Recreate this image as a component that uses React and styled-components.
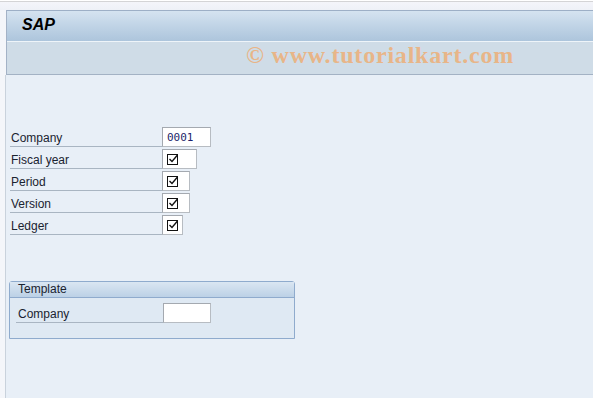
import React from "react";
import styled, { createGlobalStyle } from "styled-components";

const Global = createGlobalStyle`
  html, body { margin: 0; padding: 0; background: #f4f6fa; }
  body { font-family: "Liberation Sans", Arial, sans-serif; overflow: hidden; }
  #root { height: 398px; }
`;

const Page = styled.div`
  display: flex;
  flex-direction: column;
  height: 398px;
  width: 593px;
  overflow: hidden;
`;

const TopStrip = styled.div`
  height: 10px;
  flex: none;
  background: linear-gradient(
    to bottom,
    #ffffff 0,
    #ffffff 1px,
    #d4d4d6 1px,
    #d4d4d6 2px,
    #f4f5fa 2px,
    #eef1f7 100%
  );
`;

const Frame = styled.div`
  margin-left: 6px;
  border-left: 1px solid #a3b2c6;
  display: flex;
  flex-direction: column;
  flex: none;
`;

const TitleBar = styled.div`
  height: 30px;
  border-top: 1px solid #9dafc6;
  background: linear-gradient(to bottom, #d5e3f0 0%, #c2d5e7 45%, #adc5dc 100%);
  display: flex;
  align-items: center;
  padding-left: 15px;
  border-bottom: 1px solid #eef4f9;
`;

const Title = styled.span`
  font-family: "Liberation Sans", Arial, sans-serif;
  font-weight: bold;
  font-style: italic;
  font-size: 16px;
  color: #000;
  margin-top: -2px;
`;

const Band = styled.div`
  height: 32px;
  background: #cfdce7;
  border-bottom: 1px solid #a3b2c4;
  display: flex;
  align-items: center;
  padding-left: 239px;
`;

const Watermark = styled.span`
  font-family: "Liberation Serif", "Times New Roman", serif;
  font-weight: bold;
  font-size: 24px;
  letter-spacing: 0.8px;
  color: #e8b588;
  white-space: nowrap;
  margin-top: -6px;
`;

const Content = styled.div`
  flex: 1;
  margin-left: 5px;
  border-left: 1px solid #c9d2dc;
  background: #e8eff7;
  padding: 52px 0 0 4px;
  display: flex;
  flex-direction: column;
`;

const Fields = styled.div`
  display: flex;
  flex-direction: column;
  gap: 2px;
`;

const Row = styled.div`
  display: flex;
  align-items: flex-end;
  height: 20px;
`;

const Label = styled.div`
  width: ${(p) => p.$w || 152}px;
  height: 19px;
  box-sizing: border-box;
  border-bottom: 1px solid #a9b5c2;
  font-size: 12px;
  color: #1a2330;
  padding-left: ${(p) => p.$pad || 1}px;
  line-height: 20px;
  flex: none;
`;

const Field = styled.div`
  width: ${(p) => p.$w}px;
  height: 20px;
  box-sizing: border-box;
  background: #fff;
  border: 1px solid #b7bcc2;
  border-top-color: #a4a9b0;
  border-left-color: #a4a9b0;
  display: flex;
  align-items: center;
  padding-left: 4px;
  font-family: "DejaVu Sans Mono", "Liberation Mono", monospace;
  font-size: 11px;
  color: #1c1f6a;
  flex: none;
`;

const Check = () => (
  <svg width="12" height="12" viewBox="0 0 12 12">
    <rect x="0.5" y="1.5" width="10" height="10" fill="none" stroke="#111" strokeWidth="1" />
    <path d="M2.5 6 L5 8.5 L10.5 2" fill="none" stroke="#111" strokeWidth="1.4" />
  </svg>
);

const Group = styled.div`
  margin-top: 46px;
  margin-left: -1px;
  width: 286px;
  height: 58px;
  box-sizing: border-box;
  border: 1px solid #8fabcd;
  border-radius: 3px 3px 0 0;
  background: #dfe9f3;
  display: flex;
  flex-direction: column;
`;

const GroupHead = styled.div`
  height: 15px;
  border-bottom: 1px solid #8fabcd;
  background: linear-gradient(to bottom, #dae6f2, #bcd1e6);
  font-size: 12px;
  color: #1a2330;
  line-height: 15px;
  padding-left: 8px;
`;

const GroupBody = styled.div`
  padding: 5px 0 0 6px;
`;

const rows = [
  { label: "Company", w: 49, value: "0001" },
  { label: "Fiscal year", w: 35, check: true },
  { label: "Period", w: 28, check: true },
  { label: "Version", w: 28, check: true },
  { label: "Ledger", w: 21, check: true },
];

export default function App() {
  return (
    <Page>
      <Global />
      <TopStrip />
      <Frame>
        <TitleBar>
          <Title>SAP</Title>
        </TitleBar>
        <Band>
          <Watermark>© www.tutorialkart.com</Watermark>
        </Band>
      </Frame>
      <Content>
        <Fields>
          {rows.map((r) => (
            <Row key={r.label}>
              <Label>{r.label}</Label>
              <Field $w={r.w}>{r.check ? <Check /> : r.value}</Field>
            </Row>
          ))}
        </Fields>
        <Group>
          <GroupHead>Template</GroupHead>
          <GroupBody>
            <Row>
              <Label $w={147} $pad={2}>Company</Label>
              <Field $w={48} />
            </Row>
          </GroupBody>
        </Group>
      </Content>
    </Page>
  );
}
